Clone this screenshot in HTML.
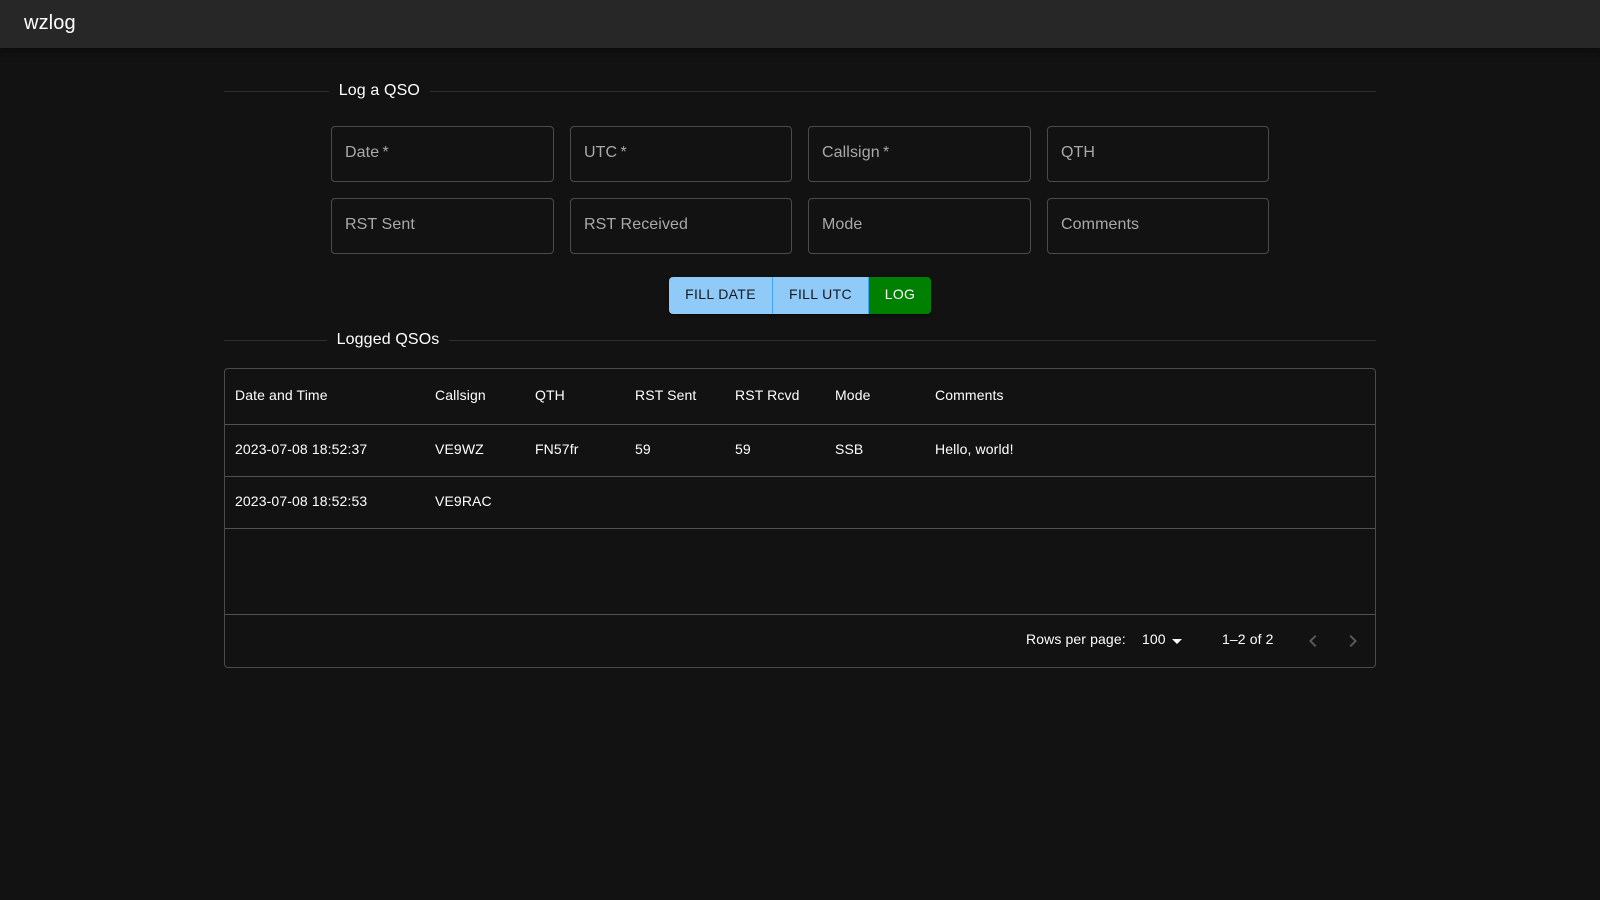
<!DOCTYPE html>
<html>
<head>
<meta charset="utf-8">
<title>wzlog</title>
<style>
html,body{margin:0;padding:0;width:1600px;height:900px;background:#121212;overflow:hidden;color:#fff;font-family:"Liberation Sans",Arial,sans-serif;}
*{box-sizing:border-box;}
.abs{position:absolute;white-space:nowrap;}
#bar{position:absolute;left:0;top:0;width:1600px;height:48px;background:#272727;box-shadow:0 2px 4px -1px rgba(0,0,0,.2),0 4px 5px 0 rgba(0,0,0,.14),0 1px 10px 0 rgba(0,0,0,.12);}
#title{left:24px;top:9px;font-size:20px;line-height:28px;letter-spacing:.12px;}
.divider{position:absolute;left:224px;width:1152px;display:flex;align-items:center;font-size:16px;line-height:24px;letter-spacing:.13px;}
.divider:before,.divider:after{content:"";border-top:1px solid #2e2e2e;position:relative;}
.divider:before{width:10%;}
.divider:after{width:90%;}
.divider span{padding:0 9.6px;white-space:nowrap;}
.f{position:absolute;width:222px;height:56px;border:1px solid #4b4b4b;border-radius:4px;font-size:16px;line-height:23px;letter-spacing:.1px;color:#a9a9a9;padding:14px 0 0 13px;white-space:nowrap;}
.w{width:223px;}
#btns{position:absolute;left:669px;top:277px;width:262px;height:37px;display:flex;border-radius:4px;overflow:hidden;font-size:14px;letter-spacing:.34px;box-shadow:0 3px 1px -2px rgba(0,0,0,.2),0 2px 2px 0 rgba(0,0,0,.14),0 1px 5px 0 rgba(0,0,0,.12);}
#btns div{height:37px;line-height:35px;text-align:center;background:#90caf9;color:rgba(0,0,0,.87);}
#grid{position:absolute;left:224px;top:368px;width:1152px;height:300px;border:1px solid #4b4b4b;border-radius:4px;}
.hl{position:absolute;left:225px;width:1150px;height:1px;background:#515151;}
.c{position:absolute;white-space:nowrap;font-size:14px;line-height:20px;letter-spacing:.12px;}
svg{position:absolute;fill:currentColor;}
</style>
</head>
<body>
<div id="bar"></div>
<div class="abs" id="title">wzlog</div>

<div class="divider" style="top:79px"><span>Log a QSO</span></div>

<div class="f w" style="left:331px;top:126px">Date&thinsp;*</div>
<div class="f" style="left:570px;top:126px">UTC&thinsp;*</div>
<div class="f w" style="left:808px;top:126px">Callsign&thinsp;*</div>
<div class="f" style="left:1047px;top:126px">QTH</div>
<div class="f w" style="left:331px;top:198px">RST Sent</div>
<div class="f" style="left:570px;top:198px">RST Received</div>
<div class="f w" style="left:808px;top:198px">Mode</div>
<div class="f" style="left:1047px;top:198px">Comments</div>

<div id="btns">
<div style="width:104px;border-right:1px solid #42a5f5">FILL DATE</div>
<div style="width:96px;border-right:1px solid #42a5f5">FILL UTC</div>
<div style="width:62px;background:#008000;color:#fff">LOG</div>
</div>

<div class="divider" style="top:328px"><span>Logged QSOs</span></div>

<div id="grid"></div>
<div class="hl" style="top:424px"></div>
<div class="hl" style="top:476px"></div>
<div class="hl" style="top:528px"></div>
<div class="hl" style="top:614px"></div>

<div class="c" style="left:235px;top:385px">Date and Time</div>
<div class="c" style="left:435px;top:385px">Callsign</div>
<div class="c" style="left:535px;top:385px">QTH</div>
<div class="c" style="left:635px;top:385px">RST Sent</div>
<div class="c" style="left:735px;top:385px">RST Rcvd</div>
<div class="c" style="left:835px;top:385px">Mode</div>
<div class="c" style="left:935px;top:385px">Comments</div>

<div class="c" style="left:235px;top:439px">2023-07-08 18:52:37</div>
<div class="c" style="left:435px;top:439px">VE9WZ</div>
<div class="c" style="left:535px;top:439px">FN57fr</div>
<div class="c" style="left:635px;top:439px">59</div>
<div class="c" style="left:735px;top:439px">59</div>
<div class="c" style="left:835px;top:439px">SSB</div>
<div class="c" style="left:935px;top:439px">Hello, world!</div>

<div class="c" style="left:235px;top:491px">2023-07-08 18:52:53</div>
<div class="c" style="left:435px;top:491px">VE9RAC</div>

<div class="c" style="left:1026px;top:629px">Rows per page:</div>
<div class="c" style="left:1142px;top:629px">100</div>
<svg style="left:1165px;top:628.5px;color:#fff" width="24" height="24" viewBox="0 0 24 24"><path d="M7 10l5 5 5-5z"/></svg>
<div class="c" style="left:1222px;top:629px">1–2 of 2</div>
<svg style="left:1301px;top:629px;color:rgba(255,255,255,.3)" width="24" height="24" viewBox="0 0 24 24"><path d="M15.41 7.41 14 6l-6 6 6 6 1.41-1.41L10.83 12z"/></svg>
<svg style="left:1341px;top:629px;color:rgba(255,255,255,.3)" width="24" height="24" viewBox="0 0 24 24"><path d="M10 6 8.59 7.41 13.17 12l-4.58 4.59L10 18l6-6z"/></svg>
</body>
</html>
